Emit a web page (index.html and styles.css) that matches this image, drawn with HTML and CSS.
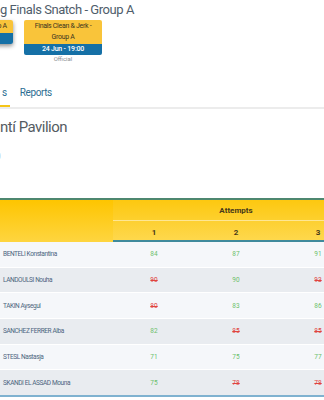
FILE: index.html
```html
<!DOCTYPE html>
<html lang="en">
<head>
<meta charset="utf-8">
<title>Finals Snatch - Group A</title>
<link rel="stylesheet" href="styles.css">
</head>
<body>
<div class="page">
  <h1 class="title">g Finals Snatch - Group A</h1>
  <div class="sessions">
    <div class="session-col">
      <div class="session active">
        <div class="s-name">Finals Snatch - Group A</div>
        <div class="s-date">24 Jun - 17:00</div>
      </div>
    </div>
    <div class="session-col">
      <div class="session">
        <div class="s-name">Finals Clean &amp; Jerk -<br>Group A</div>
        <div class="s-date">24 Jun - 19:00</div>
      </div>
      <div class="s-status">Official</div>
    </div>
  </div>
  <nav class="tabs">
    <span class="tab active">s</span>
    <span class="tab">Reports</span>
  </nav>
  <h2 class="venue">ntí Pavilion</h2>
  <div class="when">0</div>
  <table class="results">
    <colgroup>
      <col class="c-name">
      <col class="c-att">
      <col class="c-att">
      <col class="c-att">
    </colgroup>
    <thead>
      <tr class="h1">
        <th class="h-name" rowspan="2"></th>
        <th class="h-att" colspan="3">Attempts</th>
      </tr>
      <tr class="h2">
        <th class="h-num">1</th>
        <th class="h-num">2</th>
        <th class="h-num">3</th>
      </tr>
    </thead>
    <tbody>
      <tr><td class="name">BENTELI Konstantina</td><td class="ok">84</td><td class="ok">87</td><td class="ok">91</td></tr>
      <tr><td class="name">LANDOULSI Nouha</td><td class="no">90</td><td class="ok">90</td><td class="no">93</td></tr>
      <tr><td class="name">TAKIN Aysegul</td><td class="no">80</td><td class="ok">83</td><td class="ok">86</td></tr>
      <tr><td class="name">SANCHEZ FERRER Alba</td><td class="ok">82</td><td class="no">85</td><td class="no">85</td></tr>
      <tr><td class="name">STESL Nastasja</td><td class="ok">71</td><td class="ok">75</td><td class="ok">77</td></tr>
      <tr><td class="name">SKANDI EL ASSAD Mouna</td><td class="ok">75</td><td class="no">78</td><td class="no">78</td></tr>
    </tbody>
  </table>
</div>
</body>
</html>
```

FILE: styles.css
```css
html, body {
  margin: 0;
  padding: 0;
  overflow: hidden;
  background: #ffffff;
}

body {
  width: 324px;
  height: 400px;
  font-family: Roboto, "Liberation Sans", sans-serif;
}

.page {
  width: 324px;
}

.title {
  margin: 0;
  font-size: 13px;
  line-height: 20px;
  font-weight: 400;
  color: #4f5d6b;
  letter-spacing: -0.45px;
  white-space: nowrap;
}

.sessions {
  display: flex;
  align-items: flex-start;
  gap: 11px;
  margin-left: -65px;
}

.session-col {
  width: 78px;
  display: flex;
  flex-direction: column;
  align-items: center;
}

.session {
  width: 100%;
  border-radius: 2px;
  overflow: hidden;
  text-align: center;
}

.session.active {
  box-shadow: 0 2px 4px rgba(0, 0, 0, 0.45);
}

.s-name {
  background: #f9c43a;
  color: #3b3420;
  font-size: 7px;
  line-height: 11px;
  padding: 1px 2px;
  letter-spacing: -0.3px;
  white-space: nowrap;
}

.s-date {
  background: #1570a6;
  color: #ffffff;
  font-size: 7px;
  line-height: 11px;
  font-weight: 500;
  letter-spacing: -0.2px;
}

.s-status {
  font-size: 6px;
  line-height: 8px;
  color: #8a8f94;
}

.tabs {
  display: flex;
  margin-top: 20px;
  border-bottom: 2px solid #ececec;
}

.tab {
  padding: 4px 4px 6px;
  font-size: 10px;
  line-height: 12px;
  color: #2c6e92;
  letter-spacing: -0.4px;
  border-bottom: 2px solid transparent;
}

.tab.active {
  padding-left: 2px;
  padding-right: 3px;
  border-bottom-color: #f5c518;
}

.tab + .tab {
  margin-left: 6px;
}

.venue {
  margin: 8px 0 0;
  font-size: 15px;
  line-height: 20px;
  font-weight: 400;
  color: #555c62;
  letter-spacing: -0.5px;
}

.when {
  margin: 13px 0 0 -5px;
  font-size: 10px;
  line-height: 14px;
  color: #888888;
}

.results {
  margin-top: 34px;
  width: 359px;
  table-layout: fixed;
  border-collapse: separate;
  border-spacing: 0;
}

.c-name { width: 113px; }
.c-att { width: 82px; }

.results th {
  padding: 0;
  color: #46391a;
  font-size: 8px;
  font-weight: 700;
  text-align: center;
}

.h1 th {
  height: 20px;
  border-top: 2px solid #4d876f;
}

.h2 th {
  height: 21px;
  padding-top: 3px;
  box-sizing: border-box;
  border-bottom: 2px solid #3f8a9c;
}

.h-name {
  background: linear-gradient(to bottom, #fec500, #fed540);
}

.h-att {
  background: linear-gradient(to bottom, #fdc810, #fdd02e);
  border-bottom: 1px solid rgba(255, 255, 255, 0.55);
}

.h-num {
  background: linear-gradient(to bottom, #fdd031, #fed84c);
}

.results td {
  height: 24.67px;
  padding: 0;
  border-bottom: 1px solid #ffffff;
  font-size: 6.5px;
  text-align: center;
  background: #f5f7fa;
}

.results tbody tr:nth-child(even) td {
  background: #e9ecf0;
}

.results tbody tr:last-child td {
  border-bottom: 2px solid #7fb2d0;
}

.results td.name {
  text-align: left;
  padding-left: 3px;
  color: #4d6580;
  letter-spacing: -0.4px;
  white-space: nowrap;
}

.ok {
  color: #6cbf6c;
}

.no {
  color: #e0443e;
  text-decoration: line-through;
}
```
